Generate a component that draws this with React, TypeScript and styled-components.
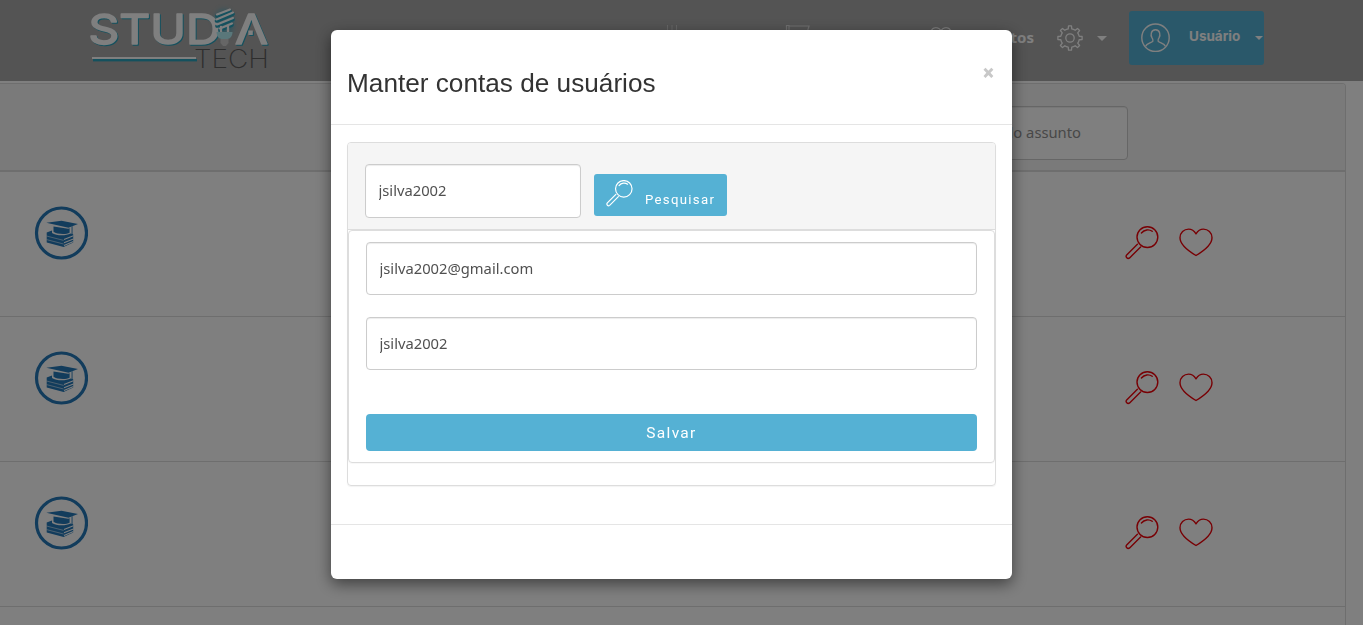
import React from "react";
import styled, { createGlobalStyle } from "styled-components";

const GlobalStyle = createGlobalStyle`
  *, *::before, *::after { box-sizing: border-box; }
  html, body { margin: 0; height: 100%; overflow: hidden; background: #fff; }
  body { font-family: "Open Sans", "Noto Sans", sans-serif; font-size: 15px; color: #555; }
  svg { display: block; flex: none; }
`;

const BLUE = "#55b1d4";

const Page = styled.div`
  height: 100vh;
  overflow: hidden;
`;

const TopBar = styled.header`
  display: flex;
  align-items: flex-start;
  height: 81px;
  padding-left: 86px;
  background: #a8a8a8;
`;

const Nav = styled.nav`
  display: flex;
  margin-left: auto;
  padding-top: 22px;
  gap: 95px;
  margin-right: 23px;
`;

const NavItem = styled.div<{ $gapAfter?: number }>`
  display: flex;
  align-items: center;
  gap: 12px;
  height: 30px;
  margin-right: ${(p) => p.$gapAfter ?? 0}px;
  font: bold 15px "Noto Sans", sans-serif;
  color: #fff;
`;

const SettingsMenu = styled.div`
  display: flex;
  align-items: center;
  gap: 14px;
  padding-top: 25px;
  margin-right: 22px;
`;

const Caret = styled.span<{ $size: number }>`
  border: ${(p) => p.$size}px solid transparent;
  border-top-color: #fff;
  border-bottom: 0;
`;

const UserButton = styled.div`
  display: flex;
  align-items: center;
  width: 135px;
  height: 54px;
  margin: 11px 99px 0 0;
  padding-left: 12px;
  border-radius: 3px;
  background: ${BLUE};
  color: #fff;
  font: bold 13.5px Inter, sans-serif;
`;

const UserName = styled.span`
  margin: -5px 15px 0 18px;
`;

const ListPanel = styled.section`
  width: 1346px;
  height: 600px;
  margin-top: 2px;
  border: 1px solid #ddd;
  border-left: 0;
  border-radius: 0 4px 0 0;
`;

const ListHeading = styled.div`
  display: flex;
  justify-content: flex-end;
  height: 88px;
  padding: 22px 217px 0 0;
  background: #f5f5f5;
  border-bottom: 2px solid #ddd;
  border-radius: 0 3px 0 0;
`;

const Field = styled.input<{ $width?: string; $height?: number }>`
  display: block;
  width: ${(p) => p.$width ?? "100%"};
  height: ${(p) => p.$height ?? 53}px;
  padding: 0 13px 2px 12.5px;
  border: 1px solid #ccc;
  border-radius: 4px;
  background: #fff;
  box-shadow: inset 0 1px 1px rgba(0, 0, 0, 0.075);
  font: 14.75px "Noto Sans", sans-serif;
  color: #505050;
  outline: none;
  &::placeholder { color: #909090; opacity: 1; }
`;

const SubjectField = styled(Field)`
  font-size: 14.75px;
  padding-right: 46px;
  text-align: right;
`;

const Row = styled.div`
  display: flex;
  justify-content: space-between;
  height: 145px;
  padding: 34px 132px 0 34px;
  border-bottom: 1px solid #ddd;
`;

const RowActions = styled.div`
  display: flex;
  gap: 20px;
  padding-top: 20px;
  svg + svg { margin-top: 2px; }
`;

const Backdrop = styled.div`
  position: fixed;
  inset: 0;
  display: flex;
  justify-content: center;
  align-items: flex-start;
  padding-top: 30px;
  padding-right: 20px;
  background: rgba(0, 0, 0, 0.5);
`;

const Modal = styled.div`
  width: 681px;
  height: 549px;
  border-radius: 6px;
  background: #fff;
  box-shadow: 0 5px 15px rgba(0, 0, 0, 0.5);
`;

const ModalHeader = styled.div`
  display: flex;
  justify-content: space-between;
  height: 95px;
  padding: 37px 17px 0 16px;
  border-bottom: 1px solid #e5e5e5;
`;

const Title = styled.h3`
  margin: 0;
  font: 400 26.2px/32px "Liberation Sans", Arial, sans-serif;
  color: #333;
`;

const Close = styled.button`
  height: 12px;
  margin-top: -1px;
  padding: 0;
  border: 0;
  background: none;
  font: 800 22px/12px "Open Sans", sans-serif;
  color: #c8c8c8;
`;

const ModalBody = styled.div`
  height: 399px;
  padding: 17px 16px 0;
`;

const Panel = styled.div`
  height: 344px;
  border: 1px solid #ddd;
  border-radius: 4px;
  box-shadow: 0 1px 1px rgba(0, 0, 0, 0.05);
`;

const PanelHeading = styled.div`
  display: flex;
  gap: 13px;
  height: 87px;
  padding: 21px 17px 0;
  background: #f5f5f5;
  border-bottom: 1px solid #ddd;
  border-radius: 3px 3px 0 0;
`;

const FormCard = styled.form`
  height: 233px;
  padding: 11px 17px 0;
  border: 1px solid #ddd;
  border-radius: 4px;
  box-shadow: 0 1px 1px rgba(0, 0, 0, 0.03);
`;

const Stack = styled.div`
  display: flex;
  flex-direction: column;
  gap: 22px;
`;

const Button = styled.button`
  border: 0;
  border-radius: 4px;
  background: ${BLUE};
  color: #fff;
`;

const SearchButton = styled(Button)`
  display: flex;
  width: 133px;
  height: 42px;
  margin-top: 10px;
  padding: 6px 0 0 12px;
  gap: 12px;
  border-radius: 3px;
  font: 400 13.2px/39px Roboto, "Liberation Sans", sans-serif;
  letter-spacing: 1.3px;
`;

const SaveButton = styled(Button)`
  display: block;
  width: 100%;
  height: 37px;
  margin-top: 44px;
  padding-top: 2px;
  font: 400 15.5px Roboto, "Liberation Sans", sans-serif;
  letter-spacing: 1.3px;
`;

const ModalFooter = styled.div`
  height: 55px;
  border-top: 1px solid #e5e5e5;
`;

function Magnifier({ size, color, weight = 2 }: { size: number; color: string; weight?: number }) {
  return (
    <svg width={size} height={size} viewBox="0 0 34 34" fill="none" stroke={color} strokeWidth={weight} strokeLinecap="round">
      <circle cx="22.4" cy="11.1" r="10.4" />
      <path d="M16.4 7C19.4 3.4 24.2 3.1 27.2 5.3" />
      <path d="M12.4 18.2L1.7 28.9c-1.7 2 .9 4.7 2.9 3L15.6 20.9" />
    </svg>
  );
}

function Heart() {
  return (
    <svg width="34" height="30" viewBox="0 0 34 30" fill="none" stroke="#f00008" strokeWidth="1.4" strokeLinejoin="round">
      <path d="M17 5.8C15 2.5 12.6 1.1 9.6 1.1C5 1.1 1 4.5 1 9.7C1 17.3 10 23.3 17 27.5C24 23.3 33 17.3 33 9.7C33 4.5 29 1.1 24.4 1.1C21.4 1.1 19 2.5 17 5.8Z" />
    </svg>
  );
}

function BooksBadge() {
  return (
    <svg width="54" height="54" viewBox="0 0 54 54">
      <circle cx="27.5" cy="27" r="25" fill="none" stroke="#2478b8" strokeWidth="3.2" />
      <g fill="#2478b8">
        <path d="M12.3 16.8L27.5 14.8L44 18L34.5 21.7Z" />
        <path d="M19.5 20.5L34.2 22.8L35.6 22.2V26.8C32 28.8 22.5 28.2 19.5 25.8Z" />
        <path d="M37.6 20.6L38.5 20.2V28L39.2 30.5H37L37.6 28Z" />
        <path d="M12.7 26.5L18 24.6V27C22.5 30 32 30 36.5 27.5L39.2 28.2V36.6L29.6 41L12.7 36.4Z" />
      </g>
      <g fill="none" stroke="#fff" strokeWidth=".9">
        <path d="M12.5 30L29.6 34.4M12.5 33.6L29.6 38" opacity=".6" />
        <path d="M30 33.6L39.4 29.8M30 36.8L39.4 33M30 39.4L39.4 35.4" strokeWidth="1.1" />
      </g>
    </svg>
  );
}

function Gear() {
  const teeth = Array.from({ length: 8 }, (_, i) => {
    const at = (r: number, offset: number) => {
      const a = ((i * 45 + offset - 90) * Math.PI) / 180;
      return `${(13 + r * Math.cos(a)).toFixed(2)} ${(13 + r * Math.sin(a)).toFixed(2)}`;
    };
    return `${i ? "L" : "M"}${at(9.3, -11)}L${at(12.2, -7)}L${at(12.2, 7)}L${at(9.3, 11)}A9 9 0 0 1 ${at(9.3, 34)}`;
  }).join("");
  return (
    <svg width="26" height="26" viewBox="0 0 26 26" fill="none" stroke="#fff" strokeWidth="1.3" strokeLinejoin="round">
      <path d={teeth + "Z"} />
      <circle cx="13" cy="13" r="4.2" />
    </svg>
  );
}

function Avatar() {
  return (
    <svg width="30" height="30" viewBox="0 0 30 30" fill="none" stroke="#fff" strokeWidth="1.4">
      <circle cx="14.5" cy="14.7" r="13.7" />
      <path d="M4.7 23.3C5.5 20.5 10.5 19.9 11.9 18.1C12.2 16.9 11.9 16.1 10.9 14.7C9.5 12.5 9.7 6.8 14.5 6.8S19.5 12.5 18.1 14.7C17.1 16.1 16.8 16.9 17.1 18.1C18.5 19.9 23.5 20.5 24.3 23.3" />
    </svg>
  );
}

const LogoText = styled.text`
  font-family: Inter, "Liberation Sans", sans-serif;
`;

const Wordmark = styled.g`
  filter: drop-shadow(1.6px 1.6px 0 #28a2bd);
  fill: #fff;
  stroke: #fff;
  stroke-width: 1.6px;
  stroke-linejoin: round;
  font-size: 41px;
  font-weight: 400;
`;

function Logo() {
  return (
    <svg width="190" height="76" viewBox="0 0 190 76" role="img">
      <defs>
        <filter id="glow" x="-50%" y="-50%" width="200%" height="200%">
          <feGaussianBlur stdDeviation="2.5" />
        </filter>
      </defs>
      <ellipse cx="138" cy="23" rx="10" ry="14" fill="#3fafc9" opacity=".6" filter="url(#glow)" />
      <Wordmark>
        <LogoText x="2.5" y="44" textLength="132" lengthAdjust="spacingAndGlyphs">STUD</LogoText>
        <LogoText x="149" y="44" textLength="33" lengthAdjust="spacingAndGlyphs">Λ</LogoText>
        <rect x="162.3" y="30.5" width="4.5" height="4.5" stroke="none" />
      </Wordmark>
      <g fill="none" strokeLinecap="round">
        <path d="M131 16L144 11M130.5 21L147 14M131 26L147 19.5M134 30L146 25" stroke="#28a2bd" strokeWidth="3.6" />
        <path d="M131 14.5L144 9.5M130.5 19.5L147 12.5M131 24.5L147 18M134 28.5L146 23.5" stroke="#fff" strokeWidth="2.1" />
        <path d="M135 27V33M142 26V33" stroke="#fff" strokeWidth="2.3" />
      </g>
      <path d="M130.5 32H146.5C146.5 36 144 39 141.5 39H135.5C133 39 130.5 36 130.5 32Z" fill="#b4eef5" />
      <path d="M134.5 39H142.5V43L140 46H137L134.5 43Z" fill="#ccc" />
      <rect x="6" y="57" width="104" height="2" fill="#fff" />
      <rect x="7" y="59" width="104" height="2.4" fill="#28a2bd" />
      <LogoText x="108" y="67.5" fill="#5c5c5c" fontSize="26" fontWeight="200" textLength="75" lengthAdjust="spacingAndGlyphs">TECH</LogoText>
    </svg>
  );
}

function ChartIcon() {
  return (
    <svg width="26" height="26" viewBox="0 0 26 26" stroke="#ccc" strokeWidth="1">
      <path d="M7.5 1V16M12 1V16M16.5 1V16M4 16H22" fill="none" />
    </svg>
  );
}

function BoardIcon() {
  return (
    <svg width="26" height="26" viewBox="0 0 26 26" fill="none" stroke="#ddd" strokeWidth="1.2">
      <path d="M1.5 7V1.5H4V7M4 2H24L20 16H6" />
    </svg>
  );
}

function NavHeart() {
  return (
    <svg width="22" height="22" viewBox="0 0 22 22" fill="none" stroke="#fff" strokeWidth="1.1">
      <path d="M11 5C9 .2 1 .5 1 7C1 13 7 17 11 20C15 17 21 13 21 7C21 .5 13 .2 11 5Z" />
    </svg>
  );
}

const rows = [1, 2, 3, 4];

export default function App() {
  return (
    <>
      <GlobalStyle />
      <Page>
        <TopBar>
          <Logo />
          <Nav>
            <NavItem $gapAfter={4}><ChartIcon /></NavItem>
            <NavItem $gapAfter={24}><BoardIcon /></NavItem>
            <NavItem><NavHeart />Favoritos</NavItem>
          </Nav>
          <SettingsMenu>
            <Gear />
            <Caret $size={5} />
          </SettingsMenu>
          <UserButton>
            <Avatar />
            <UserName>Usuário</UserName>
            <Caret $size={4} />
          </UserButton>
        </TopBar>
        <ListPanel>
          <ListHeading>
            <SubjectField $width="260px" $height={54} placeholder="Pelo assunto" readOnly />
          </ListHeading>
          {rows.map((r) => (
            <Row key={r}>
              <BooksBadge />
              <RowActions>
                <Magnifier size={34} color="#f00008" weight={1.4} />
                <Heart />
              </RowActions>
            </Row>
          ))}
        </ListPanel>
      </Page>
      <Backdrop>
        <Modal role="dialog">
          <ModalHeader>
            <Title>Manter contas de usuários</Title>
            <Close>×</Close>
          </ModalHeader>
          <ModalBody>
            <Panel>
              <PanelHeading>
                <Field $width="216px" $height={54} defaultValue="jsilva2002" />
                <SearchButton>
                  <Magnifier size={27} color="#fff" weight={1.5} />
                  Pesquisar
                </SearchButton>
              </PanelHeading>
              <FormCard>
                <Stack>
                  <Field defaultValue="jsilva2002@gmail.com" />
                  <Field defaultValue="jsilva2002" />
                </Stack>
                <SaveButton type="button">Salvar</SaveButton>
              </FormCard>
            </Panel>
          </ModalBody>
          <ModalFooter />
        </Modal>
      </Backdrop>
    </>
  );
}
